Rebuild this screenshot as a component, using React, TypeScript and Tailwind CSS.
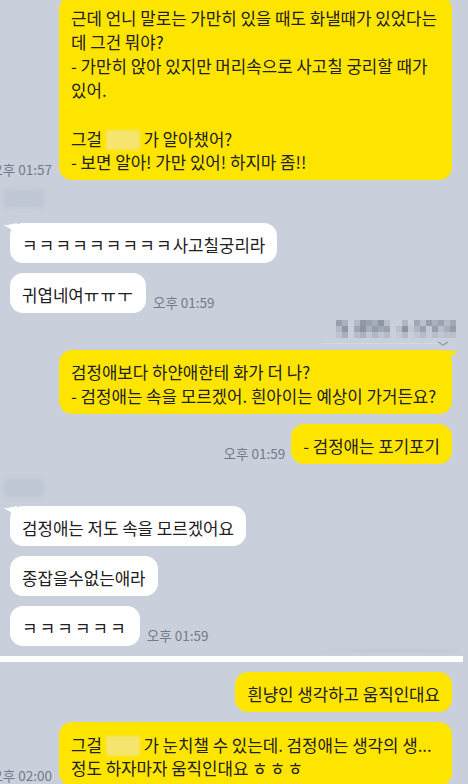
import React from "react";

function Time({ t }: { t: string }) {
  return (
    <span className="mb-[3px] shrink-0 whitespace-nowrap text-[13.5px] leading-[16px] text-[#727a89]">
      {t}
    </span>
  );
}

function J({ c, tight }: { c: string; tight?: boolean }) {
  return <span className={tight ? "tracking-[1.3px]" : "tracking-[2.2px]"}>{c}</span>;
}

function WhiteTail() {
  return (
    <svg className="absolute left-[-7px] top-0" width="14" height="12" viewBox="0 0 14 12">
      <path d="M0 2 C5 2.5 9 1 14 0 L14 12 C10 8 5 3.5 0 2Z" fill="#ffffff" />
    </svg>
  );
}

function YellowTail() {
  return (
    <svg className="absolute right-[-7px] top-0" width="14" height="12" viewBox="0 0 14 12">
      <path d="M14 1 C9 1.5 5 0.5 0 0 L0 12 C4 8 9 3.5 14 1Z" fill="#fee500" />
    </svg>
  );
}

function Lines({ lines }: { lines: React.ReactNode[] }) {
  return (
    <>
      {lines.map((l, i) => (
        <div key={i} className="h-[24px] whitespace-pre">
          {l}
        </div>
      ))}
    </>
  );
}

function Yellow({ lines, wide, tail }: { lines: React.ReactNode[]; wide?: boolean; tail?: boolean }) {
  return (
    <div
      className={
        wide
          ? "relative w-[393px] shrink-0 rounded-[13px] bg-[#fee500] px-3 pt-[10px] pb-[6px] text-[16.8px] leading-[24px] text-[#202020]"
          : "relative shrink-0 rounded-[13px] bg-[#fee500] px-3 pt-[10px] pb-[6px] text-[16.8px] leading-[24px] text-[#202020]"
      }
    >
      {tail && <YellowTail />}
      <Lines lines={lines} />
    </div>
  );
}

function White({ children, tail }: { children: React.ReactNode; tail?: boolean }) {
  return (
    <div className="relative shrink-0 rounded-[13px] bg-white px-3 pt-[10px] pb-[6px] text-[16.8px] leading-[24px] text-[#202020]">
      {tail && <WhiteTail />}
      <div className="whitespace-pre">{children}</div>
    </div>
  );
}

function Blot() {
  return <span className="inline-block h-[20px] w-[34px] translate-y-[4px] rounded-[2px] bg-[#f5e46e] blur-[1px]" />;
}

function SenderName() {
  return <div className="ml-[3px] h-[18px] w-[42px] rounded-[3px] bg-[#bfc7d3] blur-[2px]" />;
}

const mosaic: string[][] = [
  ["bg-[#98a0ad]", "bg-[#aab1bd]", "bg-[#c9d0dc]", "bg-[#b3bac6]", "bg-[#8f98a6]", "bg-[#9aa2af]", "bg-[#a5adb9]", "bg-[#8d96a4]", "bg-[#b7bec9]", "bg-[#c9d0dc]", "bg-[#c9d0dc]", "bg-[#b0b7c3]", "bg-[#c9d0dc]", "bg-[#a0a8b5]", "bg-[#bac1cc]", "bg-[#959eab]", "bg-[#a9b0bc]", "bg-[#9ba3b0]", "bg-[#b5bcc7]", "bg-[#a1a9b5]"],
  ["bg-[#b2b9c5]", "bg-[#8e97a5]", "bg-[#c9d0dc]", "bg-[#9ea6b3]", "bg-[#8a93a1]", "bg-[#a8afbb]", "bg-[#939ca9]", "bg-[#a1a9b5]", "bg-[#9aa2af]", "bg-[#c9d0dc]", "bg-[#b9c0cb]", "bg-[#8c95a3]", "bg-[#c1c8d3]", "bg-[#b0b7c3]", "bg-[#9aa2af]", "bg-[#c2c9d4]", "bg-[#979fac]", "bg-[#b8bfca]", "bg-[#a6aeba]", "bg-[#959dab]"],
  ["bg-[#bcc3ce]", "bg-[#a9b0bc]", "bg-[#c9d0dc]", "bg-[#b6bdc8]", "bg-[#aab1bd]", "bg-[#bfc6d1]", "bg-[#b1b8c4]", "bg-[#bec5d0]", "bg-[#b4bbc6]", "bg-[#c9d0dc]", "bg-[#c3cad5]", "bg-[#b3bac6]", "bg-[#c9d0dc]", "bg-[#c0c7d2]", "bg-[#b5bcc7]", "bg-[#c4cbd6]", "bg-[#b7bec9]", "bg-[#c0c7d2]", "bg-[#bbc2cd]", "bg-[#b9c0cb]"],
];

export default function App() {
  return (
    <div className="relative h-[784px] w-[468px] overflow-hidden bg-[#c9d0dc] font-['Noto_Sans_CJK_KR','Noto_Sans',sans-serif]">
      <div className="flex flex-col">
        {/* Y1 */}
        <div className="mt-[-4px] flex items-end justify-end gap-[7px] pr-4">
          <Time t="오후 01:57" />
          <Yellow
            wide
            lines={[
              "근데 언니 말로는 가만히 있을 때도 화낼때가 있었다는",
              "데 그건 뭐야?",
              "- 가만히 앉아 있지만 머리속으로 사고칠 궁리할 때가",
              "있어.",
              "",
              <>
                그걸 <Blot /> 가 알아챘어?
              </>,
              "- 보면 알아! 가만 있어! 하지마 좀!!",
            ]}
          />
        </div>

        <div className="mt-[10px]">
          <SenderName />
        </div>

        <div className="mt-[15px] flex pl-[10px]">
          <White tail>
            <J tight c="ㅋㅋㅋㅋㅋㅋㅋㅋㅋ" />
            사고칠궁리라
          </White>
        </div>
        <div className="mt-[10px] flex items-end gap-[7px] pl-[10px]">
          <White>
            귀엽네여
            <J tight c="ㅠㅠㅜ" />
          </White>
          <Time t="오후 01:59" />
        </div>

        {/* pixelated label */}
        <div className="mt-[7px] flex justify-end pr-[12px]">
          <div className="flex flex-col blur-[0.6px]">
            {mosaic.map((row, i) => (
              <div key={i} className="flex">
                {row.map((c, j) => (
                  <div key={j} className={"h-[6px] w-[6px] " + c} />
                ))}
              </div>
            ))}
          </div>
        </div>
        <div className="relative h-[12px]">
          <div className="absolute left-[322px] top-[5px] h-px w-[122px] bg-[#d3d9e3]" />
          <svg className="absolute left-[437px] top-[3px]" width="12" height="5" viewBox="0 0 12 5">
            <path d="M1 1 L6 4 L11 1" stroke="#8f98a6" strokeWidth="1.2" fill="none" />
          </svg>
        </div>

        <div className="flex justify-end pr-4">
          <Yellow
            wide
            tail
            lines={["검정애보다 하얀애한테 화가 더 나?", "- 검정애는 속을 모르겠어. 흰아이는 예상이 가거든요?"]}
          />
        </div>
        <div className="mt-[10px] flex items-end justify-end gap-[6px] pr-4">
          <Time t="오후 01:59" />
          <Yellow lines={["- 검정애는 포기포기"]} />
        </div>

        <div className="mt-[15px]">
          <SenderName />
        </div>
        <div className="mt-[9px] flex pl-[10px]">
          <White tail>검정애는 저도 속을 모르겠어요</White>
        </div>
        <div className="mt-[10px] flex pl-[10px]">
          <White>종잡을수없는애라</White>
        </div>
        <div className="mt-[10px] flex items-end gap-[7px] pl-[10px]">
          <White>
            <J c="ㅋㅋㅋㅋㅋㅋ" />
          </White>
          <Time t="오후 01:59" />
        </div>

        <div className="mt-[3px] ml-[300px] h-[3px] w-[160px] bg-gradient-to-r from-transparent via-[#c0c7d3] to-[#c3cad5] blur-[1px]" />
        <div className="mt-[4px] h-[6px] w-[463px] bg-white" />

        <div className="mt-[10px] flex justify-end pr-4">
          <Yellow lines={["흰냥인 생각하고 움직인대요"]} />
        </div>
        <div className="mt-[10px] flex items-end justify-end gap-[7px] pr-4">
          <Time t="오후 02:00" />
          <Yellow
            wide
            lines={[
              <>
                그걸 <Blot /> 가 눈치챌 수 있는데. 검정애는 생각의 생...
              </>,
              <>
                정도 하자마자 움직인대요 <J c="ㅎㅎㅎ" />
              </>,
            ]}
          />
        </div>
      </div>
    </div>
  );
}
